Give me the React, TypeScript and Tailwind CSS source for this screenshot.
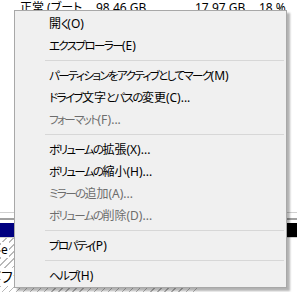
import React from "react";

type Item = { label?: string; disabled?: boolean; sep?: boolean };

const items: Item[] = [
  { label: "開く(O)" },
  { label: "エクスプローラー(E)" },
  { sep: true },
  { label: "パーティションをアクティブとしてマーク(M)" },
  { label: "ドライブ文字とパスの変更(C)..." },
  { label: "フォーマット(F)...", disabled: true },
  { sep: true },
  { label: "ボリュームの拡張(X)..." },
  { label: "ボリュームの縮小(H)..." },
  { label: "ミラーの追加(A)...", disabled: true },
  { label: "ボリュームの削除(D)...", disabled: true },
  { sep: true },
  { label: "プロパティ(P)" },
  { sep: true },
  { label: "ヘルプ(H)" },
];

// kana in the menu font are set narrower than the CJK fallback
function Label({ text }: { text: string }) {
  const parts = text.split(/([\u3040-\u30ff]+)/).filter(Boolean);
  return (
    <>
      {parts.map((p, i) =>
        /[\u3040-\u30ff]/.test(p) ? (
          <span key={i} className="text-[11.5px] tracking-[-1.6px]">
            {p}
          </span>
        ) : (
          <span key={i}>{p}</span>
        )
      )}
    </>
  );
}

export default function App() {
  return (
    <div className="relative w-[297px] h-[292px] overflow-hidden bg-white font-['Noto_Sans','Noto_Sans_CJK_JP',sans-serif] text-[12px] [font-feature-settings:'palt'] text-black">
      {/* background: disk list + graphical view */}
      <div className="flex flex-col h-full">
        <div className="flex h-[16px] items-start leading-[16px] pl-[20px]">
          <span className="w-[76px]">正常 (ブート</span>
          <span className="w-[99px]">98.46 GB</span>
          <span className="w-[64px]">17.97 GB</span>
          <span>18 %</span>
        </div>
        <div className="flex-1" />
        <div className="h-px bg-[#d0d0d0]" />
        <div className="h-[5px]" />
        <div className="h-[2px] bg-[#a0a0a0]" />
        <div className="h-[3px]" />
        <div className="flex h-[14px]">
          <div className="w-[60px] bg-[#000080]" />
          <div className="flex-1" />
          <div className="w-[60px] bg-black" />
        </div>
        <div className="h-px bg-[#d0d0d0]" />
        <div className="flex h-[54px]">
          <div className="w-[200px] flex flex-col pl-[1px] bg-[repeating-linear-gradient(135deg,#ffffff_0px,#ffffff_4px,#b8b8b8_4px,#b8b8b8_5px)]">
            <span className="mt-[4px] leading-[16px] bg-white w-fit pr-[1px]">e</span>
            <span className="mt-[10px] text-[14px] leading-[18px] bg-white w-fit">ファ</span>
          </div>
          <div className="flex-1" />
        </div>
      </div>

      {/* context menu */}
      <div className="absolute left-[14px] top-[10px] w-[273px] border border-[#a8a8a8] bg-[#f0f0f0] py-px shadow-[3px_3px_2px_rgba(0,0,0,0.3)]">
        {items.map((it, i) =>
          it.sep ? (
            <div key={i} className="h-[8px] flex items-center pl-[30px] pr-[2px]">
              <div className="h-px w-full bg-[#d7d7d7]" />
            </div>
          ) : (
            <div
              key={i}
              className={`h-[22px] flex items-center pl-[34px] pt-[2px] whitespace-nowrap ${
                it.disabled ? "text-[#6d6d6d]" : "text-black"
              }`}
            >
              <Label text={it.label ?? ""} />
            </div>
          )
        )}
      </div>
    </div>
  );
}
